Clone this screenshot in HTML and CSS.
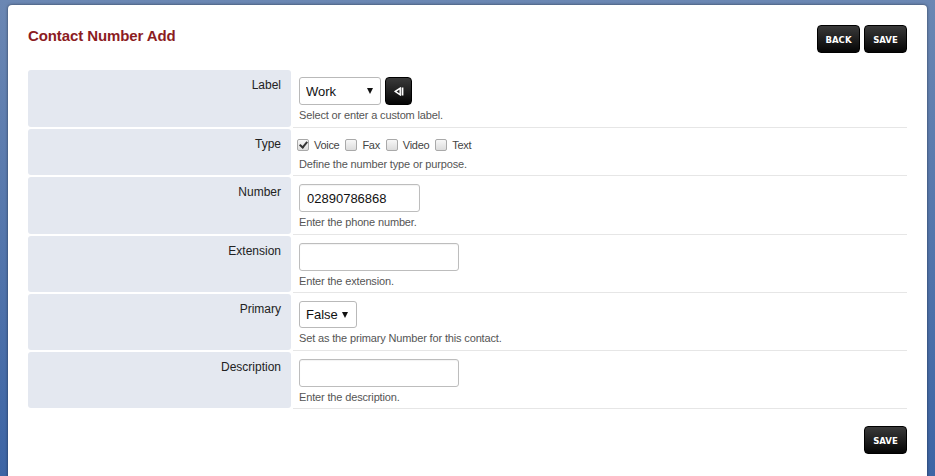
FILE: index.html
```html
<!DOCTYPE html>
<html lang="en">
<head>
    <meta charset="UTF-8">
    <meta name="viewport" content="width=device-width, initial-scale=1.0">
    <title>Contact Number Add</title>
    <link rel="stylesheet" href="styles.css">
</head>
<body>

<div class="page">
    <div class="panel">
        <div class="panel-head">
            <h1 class="title">Contact Number Add</h1>
            <div class="actions">
                <button type="button" class="btn">BACK</button>
                <button type="button" class="btn">SAVE</button>
            </div>
        </div>

        <form class="form-table">
            <div class="row">
                <div class="row-label">Label</div>
                <div class="row-field">
                    <div class="inline">
                        <span class="select-wrap select-label">
                            <select name="label"><option>Work</option><option>Home</option><option>Mobile</option></select>
                        </span>
                        <button type="button" class="btn btn-icon" title="Custom label">
                            <svg width="10" height="9" viewBox="0 0 10 9">
                                <polygon points="1.2,4.5 6.2,1.2 6.2,7.8" fill="none" stroke="#fff" stroke-width="1.5"/>
                                <rect x="7.6" y="0.5" width="1.8" height="8" fill="#fff"/>
                            </svg>
                        </button>
                    </div>
                    <div class="hint">Select or enter a custom label.</div>
                </div>
            </div>

            <div class="row">
                <div class="row-label">Type</div>
                <div class="row-field">
                    <div class="checks">
                        <label><input type="checkbox" name="voice" checked> Voice</label>
                        <label><input type="checkbox" name="fax"> Fax</label>
                        <label><input type="checkbox" name="video"> Video</label>
                        <label><input type="checkbox" name="text"> Text</label>
                    </div>
                    <div class="hint">Define the number type or purpose.</div>
                </div>
            </div>

            <div class="row">
                <div class="row-label">Number</div>
                <div class="row-field">
                    <input type="text" class="field field-short" name="number" value="02890786868">
                    <div class="hint">Enter the phone number.</div>
                </div>
            </div>

            <div class="row">
                <div class="row-label">Extension</div>
                <div class="row-field">
                    <input type="text" class="field" name="extension">
                    <div class="hint">Enter the extension.</div>
                </div>
            </div>

            <div class="row">
                <div class="row-label">Primary</div>
                <div class="row-field">
                    <span class="select-wrap select-primary">
                        <select name="primary"><option>False</option><option>True</option></select>
                    </span>
                    <div class="hint">Set as the primary Number for this contact.</div>
                </div>
            </div>

            <div class="row">
                <div class="row-label">Description</div>
                <div class="row-field">
                    <input type="text" class="field" name="description">
                    <div class="hint">Enter the description.</div>
                </div>
            </div>
        </form>

        <div class="panel-foot">
            <button type="button" class="btn">SAVE</button>
        </div>
    </div>
</div>

</body>
</html>
```

FILE: styles.css
```css
body {
    font-family: "Liberation Sans", Arial, sans-serif;
    background: linear-gradient(#6b87b3, #3d65a5);
    margin: 0;
    height: 476px;
    overflow: hidden;
}

.page {
    padding: 5px 8px 0 8px;
}

.panel {
    background: white;
    border-radius: 4px 4px 0 0;
    box-shadow: 0 0 3px rgba(0, 0, 0, 0.55);
    padding: 20px 20px 40px 20px;
}

.panel-head {
    display: flex;
    justify-content: space-between;
    align-items: flex-start;
    margin-bottom: 17px;
}

.title {
    margin: 2px 0 0 0;
    font-size: 15px;
    line-height: 18px;
    font-weight: bold;
    color: #8c1c1f;
    letter-spacing: -0.1px;
}

.actions {
    display: flex;
    gap: 4px;
}

.btn {
    height: 28px;
    width: 43px;
    padding: 0;
    background: linear-gradient(#3a3a3a, #050505);
    border: 1px solid #000;
    border-radius: 4px;
    color: white;
    font-family: "DejaVu Sans Condensed", "Liberation Sans", sans-serif;
    font-weight: bold;
    font-size: 9.5px;
    cursor: pointer;
}

.btn:hover {
    background: #222;
}

.btn-icon {
    width: 27px;
    display: flex;
    align-items: center;
    justify-content: center;
}

/* form table */
.row {
    display: grid;
    grid-template-columns: 263px 1fr;
    column-gap: 2px;
    margin-bottom: 1px;
}

.row-label {
    background: #e4e8f0;
    border-radius: 3px;
    margin-bottom: 1px;
    text-align: right;
    padding: 7px 10px 0 0;
    font-size: 12px;
    line-height: 17px;
    color: #222;
}

.row-field {
    padding: 7px 6px 3px 6px;
    border-bottom: 1px solid #e6e6e6;
}

.inline {
    display: flex;
    gap: 4px;
}

.hint {
    margin-top: 3px;
    font-size: 11px;
    line-height: 15.5px;
    letter-spacing: -0.15px;
    color: #555;
}

.select-wrap {
    position: relative;
    display: inline-block;
    vertical-align: top;
}

.select-wrap select {
    appearance: none;
    height: 28px;
    border: 1px solid #b9b9b9;
    border-radius: 3px;
    background: white;
    padding: 0 0 0 6px;
    font-family: "Liberation Sans", Arial, sans-serif;
    font-size: 13px;
    color: #111;
}

.select-wrap::after {
    content: "";
    position: absolute;
    top: 11px;
    border-left: 3.5px solid transparent;
    border-right: 3.5px solid transparent;
    border-top: 6px solid #111;
}

.select-label select {
    width: 82px;
}

.select-label::after {
    right: 8px;
}

.select-primary select {
    width: 58px;
    height: 27px;
}

.select-primary::after {
    right: 9px;
}

.field {
    display: block;
    box-sizing: border-box;
    width: 160px;
    height: 28px;
    border: 1px solid #bdbdbd;
    border-radius: 3px;
    box-shadow: inset 0 1px 1px rgba(0, 0, 0, 0.05);
    padding: 0 7px;
    font-family: "Liberation Sans", Arial, sans-serif;
    font-size: 13px;
    color: #111;
}

.field-short {
    width: 121px;
}

.checks {
    display: flex;
    gap: 6px;
    height: 18px;
    align-items: center;
    margin-left: -2px;
}

.checks label {
    display: flex;
    align-items: center;
    gap: 5px;
    font-size: 11px;
    letter-spacing: -0.3px;
    color: #444;
}

.checks input {
    appearance: none;
    position: relative;
    width: 12px;
    height: 12px;
    margin: 0;
    border: 1px solid #a9a9a9;
    border-radius: 2px;
    background: linear-gradient(#f7f7f7, #dcdcdc);
}

.checks input:checked::after {
    content: "";
    position: absolute;
    left: 3px;
    top: 0px;
    width: 3px;
    height: 6px;
    border-right: 2px solid #333;
    border-bottom: 2px solid #333;
    transform: rotate(40deg);
}

.panel-foot {
    display: flex;
    justify-content: flex-end;
    margin-top: 17px;
}
```
